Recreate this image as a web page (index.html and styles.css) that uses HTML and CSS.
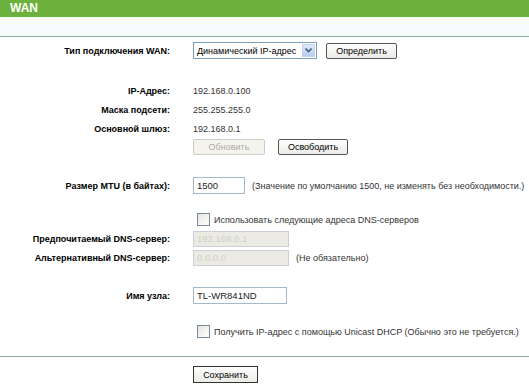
FILE: index.html
```html
<!DOCTYPE html>
<html lang="ru">
<head>
  <meta charset="UTF-8">
  <title>WAN</title>
  <link rel="stylesheet" href="styles.css">
</head>
<body>
  <div class="title">WAN</div>
  <div class="subhead"></div>

  <div class="form">
    <div class="row r-type">
      <div class="label">Тип подключения WAN:</div>
      <div class="value">
        <div class="select">
          <span class="select-text">Динамический IP-адрес</span>
          <span class="select-arrow">
            <svg width="7" height="5" viewBox="0 0 7 5"><path d="M0.5 0.5 L3.5 3.5 L6.5 0.5" fill="none" stroke="#4d6185" stroke-width="1.6"/></svg>
          </span>
        </div>
        <button class="btn btn-detect">Определить</button>
      </div>
    </div>

    <div class="row r-ip">
      <div class="label">IP-Адрес:</div>
      <div class="value">192.168.0.100</div>
    </div>
    <div class="row">
      <div class="label">Маска подсети:</div>
      <div class="value">255.255.255.0</div>
    </div>
    <div class="row">
      <div class="label">Основной шлюз:</div>
      <div class="value">192.168.0.1</div>
    </div>
    <div class="row r-btns">
      <div class="label"></div>
      <div class="value">
        <button class="btn btn-renew" disabled>Обновить</button>
        <button class="btn btn-release">Освободить</button>
      </div>
    </div>

    <div class="row r-mtu">
      <div class="label">Размер MTU (в байтах):</div>
      <div class="value">
        <input class="field field-mtu" type="text" value="1500">
        <span class="note">(Значение по умолчанию 1500, не изменять без необходимости.)</span>
      </div>
    </div>

    <div class="row r-check">
      <div class="label"></div>
      <div class="value">
        <span class="check"></span>
        <span>Использовать следующие адреса DNS-серверов</span>
      </div>
    </div>
    <div class="row r-dns">
      <div class="label">Предпочитаемый DNS-сервер:</div>
      <div class="value">
        <input class="field field-dns" type="text" value="192.168.0.1" disabled>
      </div>
    </div>
    <div class="row">
      <div class="label">Альтернативный DNS-сервер:</div>
      <div class="value">
        <input class="field field-dns" type="text" value="0.0.0.0" disabled>
        <span class="note">(Не обязательно)</span>
      </div>
    </div>

    <div class="row r-host">
      <div class="label">Имя узла:</div>
      <div class="value">
        <input class="field field-host" type="text" value="TL-WR841ND">
      </div>
    </div>

    <div class="row r-unicast">
      <div class="label"></div>
      <div class="value">
        <span class="check"></span>
        <span>Получить IP-адрес с помощью Unicast DHCP (Обычно это не требуется.)</span>
      </div>
    </div>
  </div>

  <div class="footer">
    <button class="btn btn-save">Сохранить</button>
  </div>
</body>
</html>
```

FILE: styles.css
```css
body {
  margin: 0;
  background: #fff;
  font-family: 'Liberation Sans', Arial, sans-serif;
  font-size: 9px;
  color: #333;
}
.title {
  height: 17px;
  line-height: 17px;
  background-color: #6bb13b;
  color: #fff;
  font-weight: bold;
  font-size: 12px;
  padding-left: 10px;
}
.subhead {
  height: 19px;
  background-color: #f7fbfb;
  border-bottom: 1px solid #86b09a;
}
.form {
  padding-top: 4px;
}
.row {
  display: flex;
  align-items: center;
  height: 19px;
}
.label {
  width: 170px;
  flex: none;
  text-align: right;
  font-weight: bold;
  color: #000;
}
.value {
  margin-left: 23px;
  display: flex;
  align-items: center;
  white-space: nowrap;
}
.r-ip {
  margin-top: 21px;
}
.r-btns {
  height: 17px;
}
.r-mtu {
  margin-top: 21px;
}
.r-check {
  margin-top: 15px;
}
.r-host {
  margin-top: 19px;
}
.r-unicast {
  margin-top: 17px;
}
.select {
  width: 122px;
  height: 15px;
  border: 1px solid #7f9db9;
  display: flex;
  align-items: center;
  background: #fff;
  color: #000;
}
.select-text {
  flex: 1;
  padding-left: 3px;
  font-size: 9px;
}
.select-arrow {
  width: 13px;
  height: 13px;
  margin-right: 1px;
  display: flex;
  align-items: center;
  justify-content: center;
  background: linear-gradient(#dfe9fb, #b7cdf5);
  border: 1px solid #c0d2f0;
  box-sizing: border-box;
}
.btn {
  font-family: 'Liberation Sans', Arial, sans-serif;
  font-size: 9px;
  color: #000;
  height: 16px;
  padding: 0 4px;
  border: 1px solid #555;
  border-radius: 2px;
  background: linear-gradient(#fefefe, #ecebe6);
  line-height: 14px;
}
.btn-detect {
  margin-left: 9px;
  width: 71px;
}
.btn-renew {
  width: 72px;
  color: #b0ad9f;
  border-color: #cfcdc2;
  background: #f4f3ee;
}
.btn-release {
  margin-left: 13px;
  width: 70px;
}
.field {
  font-family: 'Liberation Sans', Arial, sans-serif;
  font-size: 9.5px;
  color: #222;
  height: 17px;
  box-sizing: border-box;
  border: 1px solid #a5b9cc;
  padding: 0 3px;
  margin: 0;
}
.field-mtu {
  width: 52px;
}
.field-dns {
  width: 96px;
  height: 16px;
  background: #ebebe4;
  border-color: #c8cfd8;
  color: #d0cfc6;
}
.field-host {
  width: 94px;
}
.note {
  margin-left: 7px;
}
.check {
  display: inline-block;
  width: 11px;
  height: 11px;
  border: 1px solid #7a8a99;
  background: linear-gradient(135deg, #e4e4df, #fff);
  margin: 0 4px 0 4px;
}
.footer {
  margin-top: 15px;
  border-top: 1px solid #86b09a;
  padding: 9px 0 0 193px;
}
.btn-save {
  width: 65px;
  padding: 0;
  height: 17px;
  border: 1px solid #333;
  border-radius: 0;
}
```
